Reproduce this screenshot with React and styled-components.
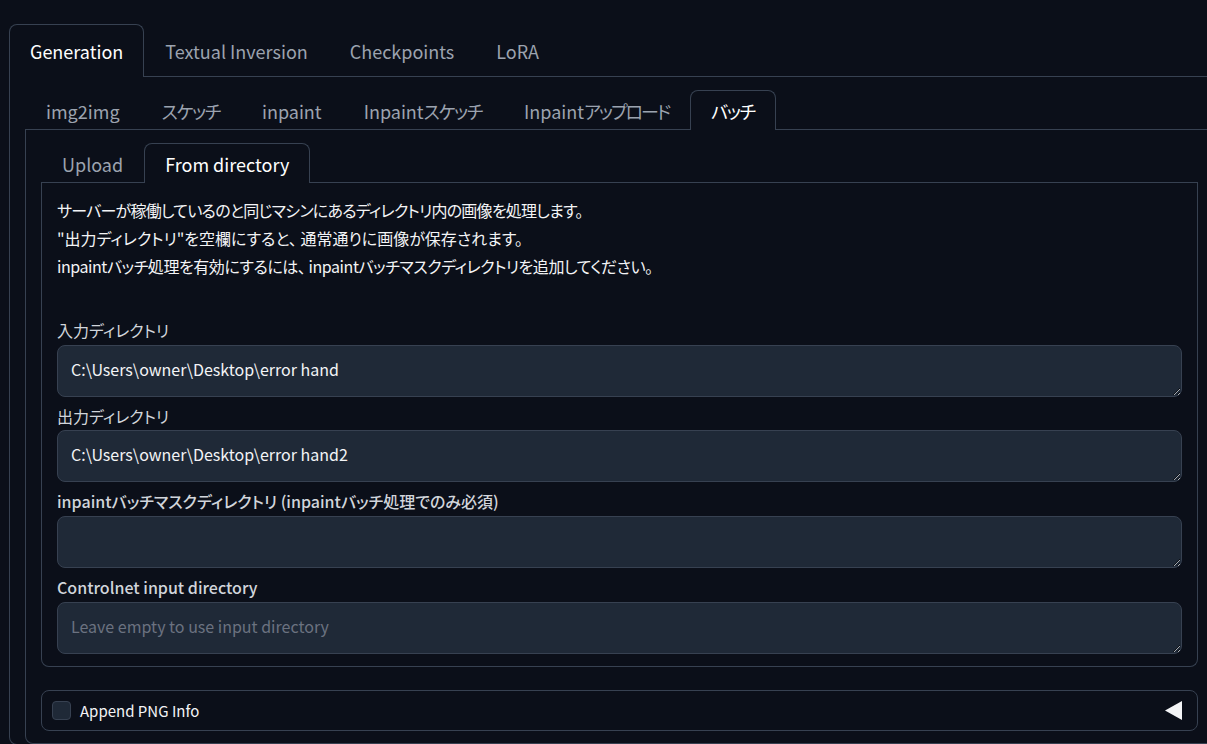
import React from "react";
import styled, { createGlobalStyle } from "styled-components";

const GlobalStyle = createGlobalStyle`
  html, body {
    margin: 0;
    padding: 0;
    background: #0b0f19;
    overflow: hidden;
  }
  body {
    font-family: "Noto Sans CJK JP", "Noto Sans", sans-serif;
    color: #e5e7eb;
    font-feature-settings: "palt";
  }
`;

const Page = styled.div`
  width: 1221px;
  padding: 24px 0 0 9px;
`;

const TabNav = styled.div`
  display: flex;
  align-items: flex-end;
  border-bottom: 1px solid #374151;
`;

const TabButton = styled.button`
  font-family: inherit;
  font-feature-settings: "palt";
  font-size: 18px;
  height: ${(p) => (p.$size === "lg" ? "53px" : "40px")};
  padding: 0 20px;
  margin-bottom: -1px;
  background: ${(p) => (p.$active ? "#0b0f19" : "transparent")};
  color: ${(p) => (p.$active ? "#ffffff" : "#9ca3af")};
  border: 1px solid ${(p) => (p.$active ? "#374151" : "transparent")};
  border-bottom: none;
  border-radius: 8px 8px 0 0;
  cursor: pointer;
  white-space: nowrap;
`;

/* kana runs in the tab labels sit a little tighter than the Latin ones */
const Kana = styled.span`
  letter-spacing: ${(p) => p.$squeeze || "-1.3px"};
`;

const TabPanel = styled.div`
  border: 1px solid #374151;
  border-top: none;
  border-radius: 0 0 8px 8px;
  padding: ${(p) => p.$pad || "13px 15px 12px"};
`;

const Intro = styled.div`
  font-size: 16px;
  line-height: 28px;
  color: #f3f4f6;
  margin-bottom: 39px;

  p {
    margin: 0;
  }
`;

const IntroLine = styled.p`
  letter-spacing: ${(p) => p.$spacing || "0"};
`;

const Fields = styled.div`
  display: flex;
  flex-direction: column;
  gap: 8px;
`;

const Field = styled.label`
  display: flex;
  flex-direction: column;
  gap: 3px;
`;

const FieldLabel = styled.span`
  font-size: 16px;
  line-height: 22.67px;
  font-weight: ${(p) => (p.$strong ? 500 : 400)};
  color: #d1d5db;
`;

const TextBox = styled.textarea`
  box-sizing: border-box;
  height: 52px;
  width: 100%;
  padding: 11px 13px 15px;
  font-family: inherit;
  font-feature-settings: "palt";
  font-size: 16px;
  line-height: 24px;
  color: #f3f4f6;
  background: #1f2937;
  border: 1px solid #374151;
  border-radius: 8px;
  resize: vertical;
  outline: none;
  overflow: hidden;

  &::placeholder {
    color: #6b7280;
  }
`;

const AccordionBar = styled.div`
  display: flex;
  align-items: center;
  margin-top: 23px;
  height: 41px;
  box-sizing: border-box;
  padding: 0 15px 0 10px;
  border: 1px solid #374151;
  border-radius: 8px;
`;

const CheckRow = styled.label`
  display: flex;
  align-items: center;
  gap: 9px;
  font-size: 15px;
  color: #f3f4f6;
  flex: 1;
`;

const CheckBox = styled.span`
  width: 19px;
  height: 19px;
  box-sizing: border-box;
  background: #1f2937;
  border: 1px solid #374151;
  border-radius: 4px;
`;

const Caret = styled.svg`
  width: 17px;
  height: 19px;
  display: block;
`;

export default function App() {
  return (
    <>
      <GlobalStyle />
      <Page>
        <TabNav>
          <TabButton $size="lg" $active>Generation</TabButton>
          <TabButton $size="lg">Textual Inversion</TabButton>
          <TabButton $size="lg">Checkpoints</TabButton>
          <TabButton $size="lg">LoRA</TabButton>
        </TabNav>
        <TabPanel $pad="13px 15px 0">
          <TabNav>
            <TabButton>img2img</TabButton>
            <TabButton><Kana>スケッチ</Kana></TabButton>
            <TabButton>inpaint</TabButton>
            <TabButton>Inpaint<Kana>スケッチ</Kana></TabButton>
            <TabButton>Inpaint<Kana $squeeze="-2px">アップロード</Kana></TabButton>
            <TabButton $active><Kana>バッチ</Kana></TabButton>
          </TabNav>
          <TabPanel $pad="13px 15px 12px">
            <TabNav>
              <TabButton>Upload</TabButton>
              <TabButton $active>From directory</TabButton>
            </TabNav>
            <TabPanel $pad="13px 15px 12px">
              <Intro>
                <IntroLine $spacing="-0.75px">サーバーが稼働しているのと同じマシンにあるディレクトリ内の画像を処理します。</IntroLine>
                <IntroLine>"出力ディレクトリ"を空欄にすると、 通常通りに画像が保存されます。</IntroLine>
                <IntroLine $spacing="-0.45px">inpaintバッチ処理を有効にするには、 inpaintバッチマスクディレクトリを追加してください。</IntroLine>
              </Intro>
              <Fields>
                <Field>
                  <FieldLabel>入力ディレクトリ</FieldLabel>
                  <TextBox defaultValue={"C:\\Users\\owner\\Desktop\\error hand"} />
                </Field>
                <Field>
                  <FieldLabel>出力ディレクトリ</FieldLabel>
                  <TextBox defaultValue={"C:\\Users\\owner\\Desktop\\error hand2"} />
                </Field>
                <Field>
                  <FieldLabel $strong>inpaintバッチマスクディレクトリ (inpaintバッチ処理でのみ必須)</FieldLabel>
                  <TextBox />
                </Field>
                <Field>
                  <FieldLabel $strong>Controlnet input directory</FieldLabel>
                  <TextBox placeholder="Leave empty to use input directory" />
                </Field>
              </Fields>
            </TabPanel>
            <AccordionBar>
              <CheckRow>
                <CheckBox />
                Append PNG Info
              </CheckRow>
              <Caret viewBox="0 0 17 19">
                <polygon points="17,0 17,19 0,9.5" fill="#f3f4f6" />
              </Caret>
            </AccordionBar>
          </TabPanel>
        </TabPanel>
      </Page>
    </>
  );
}
